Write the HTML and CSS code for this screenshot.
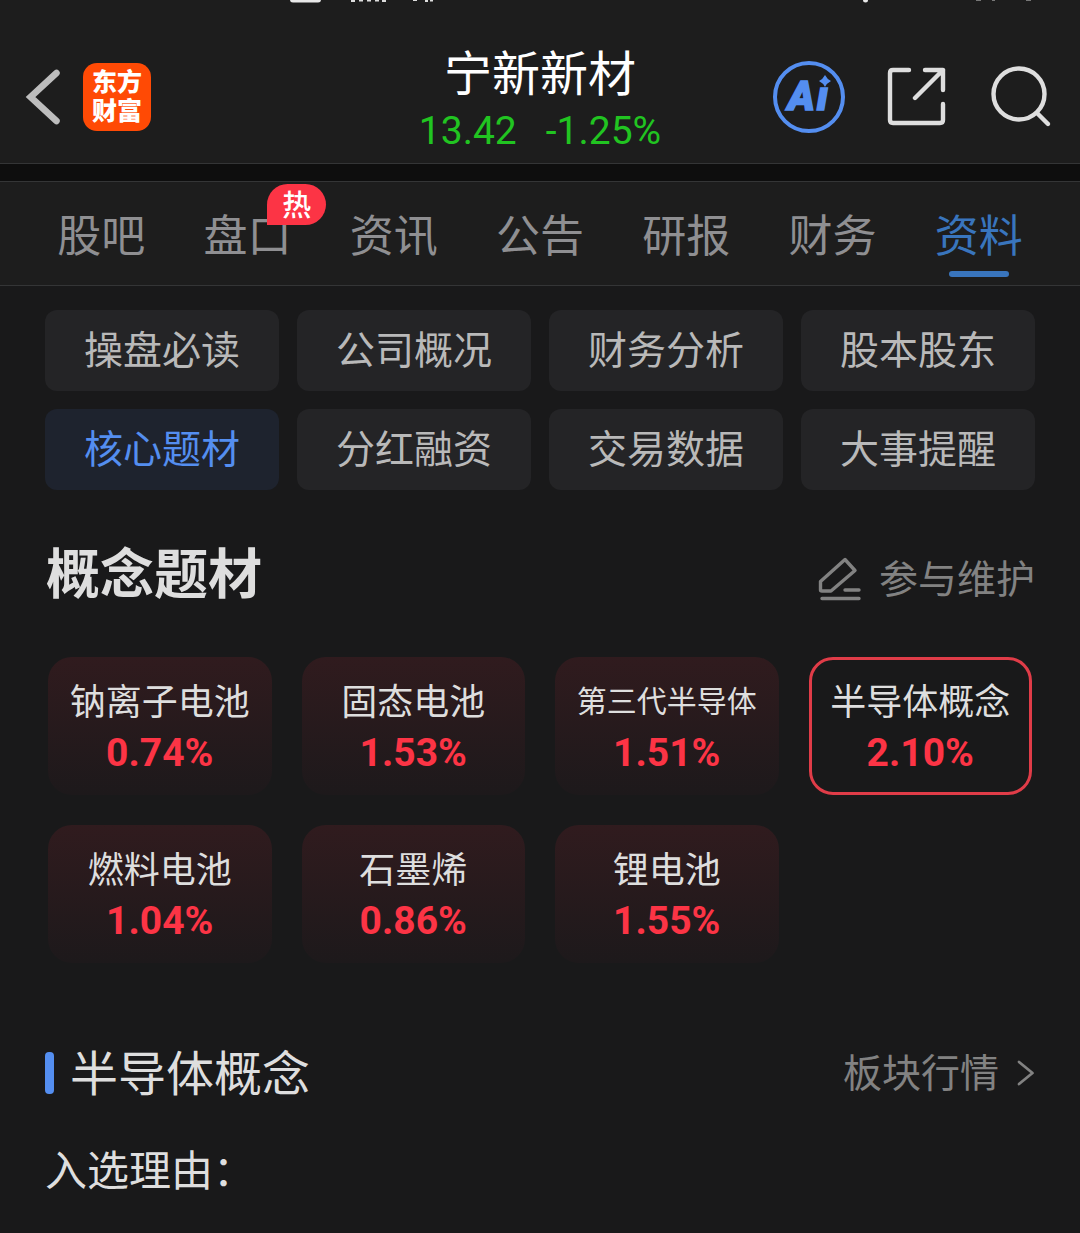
FILE: index.html
```html
<!DOCTYPE html>
<html lang="zh-CN">
<head>
    <meta charset="UTF-8">
    <meta name="viewport" content="width=device-width, initial-scale=1.0">
    <title>宁新新材</title>
    <link rel="stylesheet" href="styles.css">
</head>
<body>
    <!-- Bottom edge of the phone status bar -->
    <svg class="status-bar" viewBox="0 0 1080 4" aria-hidden="true">
        <rect x="290" y="-10" width="31" height="12.500" rx="3" fill="#e8e8e8"/>
        <path d="M351 0h4v2h-4zM359 0h4v1.500h-4zM367 0h4v1.500h-4zM375 0h4v1.500h-4zM382 0h4v2h-4zM413 0h4v1h-4zM425 0h3v2h-3zM430 0h3v1.500h-3z" fill="#ddd"/>
        <circle cx="865.500" cy="0" r="2.500" fill="#e8e8e8"/>
        <path d="M976 0h5v1h-5zM992 0h3v1h-3zM1026 0h5v1h-5z" fill="#777"/>
    </svg>

    <header class="header">
        <div class="header-left">
            <svg class="back-icon" width="40" height="60" viewBox="0 0 40 60">
                <path d="M34.500 6L8.500 30L34.500 54" fill="none" stroke="#bdbdbd" stroke-width="6.500" stroke-linecap="round"/>
            </svg>
            <div class="logo"><span>东方</span><span>财富</span></div>
        </div>
        <div class="stock">
            <h1 class="stock-name">宁新新材</h1>
            <div class="stock-quote"><span>13.42</span><span>-1.25%</span></div>
        </div>
        <div class="header-right">
            <div class="ai-icon">
                <span class="ai-text">Aı</span>
                <svg class="ai-star" width="12" height="12" viewBox="0 0 12 12">
                    <path d="M6 0Q8 4 12 6Q8 8 6 12Q4 8 0 6Q4 4 6 0Z" fill="#548ef0"/>
                </svg>
            </div>
            <svg class="share-icon" width="60" height="60" viewBox="0 0 60 60" fill="none" stroke="#dedede" stroke-width="4.400" stroke-linecap="round" stroke-linejoin="round">
                <path d="M22 3H6Q3 3 3 6V53Q3 56 6 56H53Q56 56 56 53V37"/>
                <path d="M38 3H56V23M56 3L28 31"/>
            </svg>
            <svg class="search-icon" width="62" height="62" viewBox="0 0 62 62" fill="none" stroke="#dedede" stroke-width="4.400" stroke-linecap="round">
                <circle cx="29" cy="28" r="25.500"/>
                <path d="M47 47L58 58"/>
            </svg>
        </div>
    </header>

    <nav class="tabs">
        <a class="tab">股吧</a>
        <a class="tab">盘口<span class="badge">热</span></a>
        <a class="tab">资讯</a>
        <a class="tab">公告</a>
        <a class="tab">研报</a>
        <a class="tab">财务</a>
        <a class="tab active">资料</a>
    </nav>

    <main class="content">
        <div class="menu">
            <a class="menu-item">操盘必读</a>
            <a class="menu-item">公司概况</a>
            <a class="menu-item">财务分析</a>
            <a class="menu-item">股本股东</a>
            <a class="menu-item active">核心题材</a>
            <a class="menu-item">分红融资</a>
            <a class="menu-item">交易数据</a>
            <a class="menu-item">大事提醒</a>
        </div>

        <div class="section-header">
            <h2 class="section-title">概念题材</h2>
            <a class="section-link">
                <svg class="edit-icon" width="44" height="44" viewBox="0 0 44 44" fill="none" stroke="#828282" stroke-width="3.400" stroke-linecap="round" stroke-linejoin="round">
                    <path d="M2.500 33V24.500L27 2.500L37 13.500L13 34H4Q2.500 34 2.500 33Z"/>
                    <path d="M27 33H41M4 41.500H41"/>
                </svg>
                参与维护
            </a>
        </div>

        <div class="concepts">
            <div class="concept"><span class="concept-name">钠离子电池</span><span class="concept-change">0.74%</span></div>
            <div class="concept"><span class="concept-name">固态电池</span><span class="concept-change">1.53%</span></div>
            <div class="concept"><span class="concept-name small">第三代半导体</span><span class="concept-change">1.51%</span></div>
            <div class="concept selected"><span class="concept-name">半导体概念</span><span class="concept-change">2.10%</span></div>
            <div class="concept"><span class="concept-name">燃料电池</span><span class="concept-change">1.04%</span></div>
            <div class="concept"><span class="concept-name">石墨烯</span><span class="concept-change">0.86%</span></div>
            <div class="concept"><span class="concept-name">锂电池</span><span class="concept-change">1.55%</span></div>
        </div>

        <div class="detail-header">
            <h3 class="detail-title"><span>半导体概念</span></h3>
            <a class="detail-link">
                <span>板块行情</span>
                <svg width="18" height="26" viewBox="0 0 18 26">
                    <path d="M2 2L15.500 13L2 24" fill="none" stroke="#828282" stroke-width="2.800" stroke-linecap="round" stroke-linejoin="round"/>
                </svg>
            </a>
        </div>
        <p class="reason">入选理由：</p>
    </main>
</body>
</html>
```
FILE: styles.css
```css
* {
    box-sizing: border-box;
}
body {
    margin: 0;
    width: 1080px;
    height: 1233px;
    overflow: hidden;
    background-color: #19191a;
    color: #dedede;
    font-family: "Noto Sans CJK SC", sans-serif;
}
h1, h2, h3, p {
    margin: 0;
    font-weight: normal;
}
svg {
    display: block;
    flex-shrink: 0;
}
.status-bar {
    width: 1080px;
    height: 4px;
    background-color: #1d1d1d;
}

/* Header */
.header {
    display: grid;
    grid-template-columns: 1fr auto 1fr;
    height: 160px;
    padding: 0 22px;
    background-color: #1d1d1d;
    border-bottom: 1px solid #343536;
}
.header-left {
    display: flex;
    align-items: center;
    gap: 21px;
    height: 185px;
}
.logo {
    display: flex;
    flex-direction: column;
    align-items: center;
    justify-content: center;
    width: 68px;
    height: 68px;
    padding-bottom: 4px;
    border-radius: 14px;
    background-color: #ff4a05;
    color: #fff;
    font-size: 25px;
    font-weight: 900;
    line-height: 29px;
}
.stock {
    padding-top: 34px;
    text-align: center;
}
.stock-name {
    color: #fff;
    font-size: 48px;
    line-height: 64px;
}
.stock-quote {
    display: flex;
    gap: 29px;
    padding-top: 2px;
    color: #21c421;
    font-family: Roboto, sans-serif;
    font-size: 39px;
    line-height: 55px;
}
.header-right {
    display: flex;
    justify-content: flex-end;
    align-items: center;
    height: 185px;
    margin-right: 6px;
}
.ai-icon {
    position: relative;
    width: 72px;
    height: 72px;
    border: 4px solid #548ef0;
    border-radius: 50%;
    color: #548ef0;
    text-align: center;
}
.ai-text {
    font-family: Roboto, sans-serif;
    font-size: 41px;
    font-weight: 900;
    font-style: italic;
    letter-spacing: 2px;
    line-height: 62px;
    -webkit-text-stroke: 1.5px #548ef0;
}
.ai-star {
    position: absolute;
    left: 42px;
    top: 10px;
}
.share-icon {
    margin-left: 42px;
}
.search-icon {
    margin-left: 43px;
}

/* Tabs */
.tabs {
    display: flex;
    height: 105px;
    margin-top: 17px;
    padding: 0 28px;
    background-color: #1d1d1d;
    border-top: 1px solid #343536;
    border-bottom: 1px solid #343536;
    box-shadow: 0 -17px 0 #0e0e0e;
}
.tab {
    position: relative;
    flex: 1;
    color: #8f8f92;
    font-size: 44px;
    line-height: 102px;
    text-align: center;
}
.tab.active {
    color: #3975bd;
}
.tab.active::after {
    content: "";
    position: absolute;
    left: 50%;
    bottom: 8px;
    width: 60px;
    height: 6px;
    margin-left: -30px;
    border-radius: 3px;
    background-color: #3975bd;
}
.badge {
    position: absolute;
    left: 93px;
    top: 2px;
    width: 59px;
    height: 41px;
    border-radius: 21px 21px 21px 0;
    background-color: #fc3445;
    color: #fff;
    font-size: 29px;
    font-weight: 500;
    line-height: 38px;
}

/* Content */
.content {
    padding: 24px 45px 0;
}
.menu {
    display: grid;
    grid-template-columns: repeat(4, 1fr);
    gap: 18px;
}
.menu-item {
    height: 81px;
    border-radius: 12px;
    background-color: #242426;
    color: #b9b9b9;
    font-size: 39px;
    line-height: 74px;
    text-align: center;
}
.menu-item.active {
    background-color: #1e232e;
    color: #548ef0;
}
.section-header {
    display: flex;
    justify-content: space-between;
    align-items: center;
    height: 80px;
    margin-top: 41px;
}
.section-title {
    padding: 0 0 1px 1px;
    font-size: 54px;
    font-weight: bold;
    line-height: 79px;
}
.section-link {
    display: flex;
    align-items: center;
    gap: 17px;
    padding-top: 10px;
    color: #828282;
    font-size: 39px;
    line-height: 58px;
}
.edit-icon {
    margin-top: 5px;
}
.concepts {
    display: grid;
    grid-template-columns: repeat(4, 1fr);
    gap: 30px;
    margin: 46px 3px 0;
}
.concept {
    display: flex;
    flex-direction: column;
    align-items: center;
    height: 138px;
    padding-top: 16px;
    border-radius: 24px;
    background-image: linear-gradient(#301b1e, #1d191b);
}
.concept.selected {
    padding-top: 13px;
    border: 3px solid #e03c48;
    background-image: none;
}
.concept-name {
    font-size: 36px;
    line-height: 52px;
}
.concept-name.small {
    font-size: 30px;
}
.concept-change {
    color: #fc3445;
    font-family: Roboto, sans-serif;
    font-size: 39px;
    font-weight: bold;
    line-height: 56px;
}
.detail-header {
    display: flex;
    justify-content: space-between;
    align-items: center;
    height: 70px;
    margin-top: 75px;
}
.detail-title {
    display: flex;
    align-items: center;
    gap: 16px;
    font-size: 48px;
    line-height: 70px;
}
.detail-title span {
    padding-bottom: 6px;
}
.detail-title::before {
    content: "";
    width: 9px;
    height: 42px;
    border-radius: 4px;
    background-color: #548ef0;
}
.detail-link {
    display: flex;
    align-items: center;
    gap: 18px;
    color: #828282;
    font-size: 39px;
    line-height: 58px;
}
.detail-link span {
    padding-bottom: 6px;
}
.reason {
    margin-top: 30px;
    font-size: 42px;
    line-height: 60px;
}
```
